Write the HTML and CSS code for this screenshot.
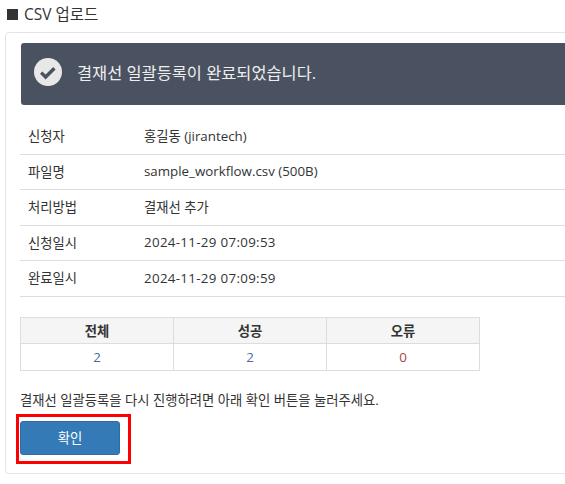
FILE: index.html
```html
<!DOCTYPE html>
<html lang="ko">
<head>
<meta charset="utf-8">
<title>CSV 업로드</title>
<link rel="stylesheet" href="styles.css">
</head>
<body>
<h1 class="title"><span class="square"></span>CSV 업로드</h1>
<section class="panel">
  <div class="alert">
    <svg class="check" width="28" height="28" viewBox="0 0 28 28" aria-hidden="true">
      <circle cx="14" cy="14" r="14" fill="#e8e8e8"/>
      <path d="M7.2 14.6l4.4 4.4 8.8-8.8" fill="none" stroke="#4a5261" stroke-width="3.4"/>
    </svg>
    <span>결재선 일괄등록이 완료되었습니다.</span>
  </div>
  <div class="info">
    <div class="row"><div class="key">신청자</div><div>홍길동 (jirantech)</div></div>
    <div class="row"><div class="key">파일명</div><div>sample_workflow.csv (500B)</div></div>
    <div class="row"><div class="key">처리방법</div><div>결재선 추가</div></div>
    <div class="row"><div class="key">신청일시</div><div class="date">2024-11-29 07:09:53</div></div>
    <div class="row"><div class="key">완료일시</div><div class="date">2024-11-29 07:09:59</div></div>
  </div>
  <table class="stats">
    <thead><tr><th>전체</th><th>성공</th><th>오류</th></tr></thead>
    <tbody><tr><td class="ok">2</td><td class="ok">2</td><td class="err">0</td></tr></tbody>
  </table>
  <p class="note">결재선 일괄등록을 다시 진행하려면 아래 확인 버튼을 눌러주세요.</p>
  <div class="actions">
    <button class="btn" type="button">확인</button>
    <div class="highlight"></div>
  </div>
</section>
</body>
</html>
```
FILE: styles.css
```css
html, body { margin: 0; padding: 0; background: #fff; overflow: hidden; }
body {
  width: 565px;
  height: 484px;
  font-family: "Open Sans", "Noto Sans CJK KR", sans-serif;
  font-size: 13.33px;
  color: #333;
}
.title {
  margin: 0;
  padding: 1px 0 0 7px;
  height: 28px;
  box-sizing: border-box;
  font-size: 15.5px;
  font-weight: 400;
  line-height: 21px;
  display: flex;
  align-items: center;
  color: #333;
}
.square { width: 10.5px; height: 11px; background: #333; margin-right: 6.5px; }
.panel {
  margin: 4px 0 0 5px;
  width: 620px;
  height: 442px;
  box-sizing: border-box;
  border: 1px solid #e3e3e8;
  border-radius: 4px;
  padding: 10px 14px;
  position: relative;
}
.alert {
  height: 61.5px;
  box-sizing: border-box;
  background: #4a5261;
  border-radius: 3px;
  color: #eee;
  display: flex;
  align-items: center;
  padding: 0 0 4px 13px;
  margin-left: 1px;
  font-size: 16.4px;
  gap: 15px;
  margin-bottom: 14.5px;
}
.row {
  height: 35.5px;
  box-sizing: border-box;
  border-bottom: 1px solid #ddd;
  display: flex;
  align-items: center;
  padding: 0 0 1px 8px;
}
.key { width: 116px; }
.date { letter-spacing: 0.32px; }
.stats {
  margin-top: 20px;
  width: 460px;
  border-collapse: collapse;
  table-layout: fixed;
  font-size: 13.33px;
}
.stats th, .stats td { border: 1px solid #ddd; text-align: center; padding: 0; }
.stats th { background: #f5f5f5; font-weight: 700; height: 25px; }
.stats td { height: 26px; }
.ok { color: #4a6d9c; }
.err { color: #a94442; }
.note { margin: 19px 0 0; line-height: 20px; }
.actions { margin-top: 11px; position: relative; }
.btn {
  display: block;
  width: 100px;
  height: 34px;
  background: #337ab7;
  border: 1px solid #2e6da4;
  border-radius: 3px;
  color: #fff;
  font: inherit;
  padding: 0;
}
.highlight {
  position: absolute;
  left: -4px;
  top: -7px;
  width: 115px;
  height: 50px;
  box-sizing: border-box;
  border: 3px solid #f00;
}
```
